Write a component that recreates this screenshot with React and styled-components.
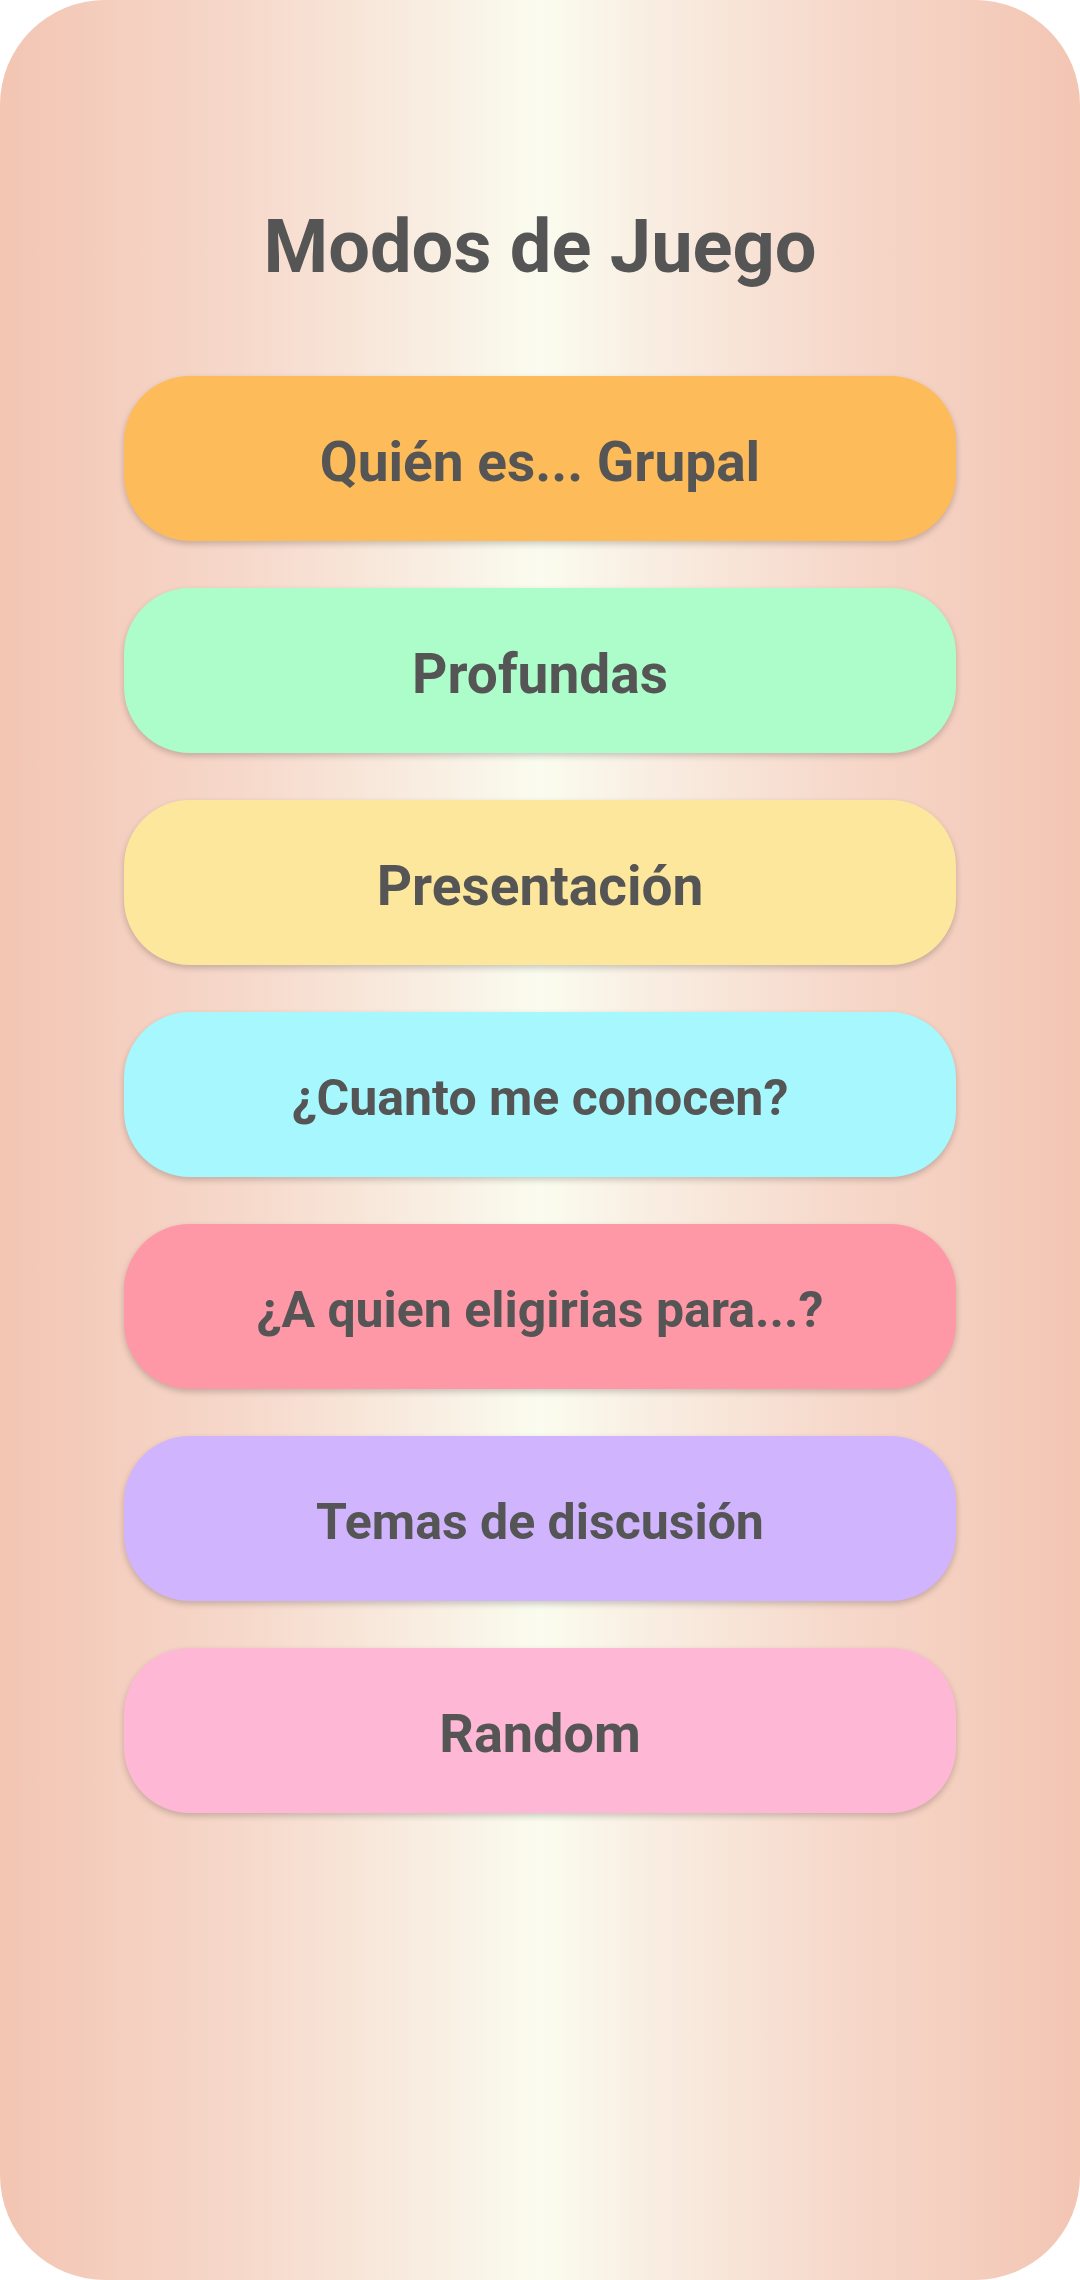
import styled, { createGlobalStyle } from "styled-components";

const GlobalStyle = createGlobalStyle`
    html, body {
        margin: 0;
        padding: 0;
        background: #ffffff;
    }
    * {
        box-sizing: border-box;
    }
`;

const modes = [
    { label: "Quién es... Grupal", color: "#fdbb59", size: 55 },
    { label: "Profundas", color: "#adfdca", size: 55 },
    { label: "Presentación", color: "#fde79d", size: 55 },
    { label: "¿Cuanto me conocen?", color: "#a6f8fe", size: 50 },
    { label: "¿A quien eligirias para...?", color: "#fe98a7", size: 50 },
    { label: "Temas de discusión", color: "#d0b4fe", size: 50 },
    { label: "Random", color: "#feb8d6", size: 54 },
];

function App() {
    return (
        <>
            <GlobalStyle />
            <Screen>
                <Title>Modos de Juego</Title>
                <ModeList>
                    {modes.map((mode) => (
                        <ModeButton key={mode.label} $bg={mode.color} $size={mode.size}>
                            {mode.label}
                        </ModeButton>
                    ))}
                </ModeList>
            </Screen>
        </>
    );
}

const Screen = styled.div`
    width: 1080px;
    height: 2280px;
    border-radius: 105px;
    overflow: hidden;
    background: linear-gradient(
        to right,
        #f3c5b3 0%,
        #f6d8ca 22%,
        #f9eee2 40%,
        #fafcef 50%,
        #f9eee2 60%,
        #f6d8ca 78%,
        #f3c5b3 100%
    );
    display: flex;
    flex-direction: column;
    align-items: center;
    padding-top: 210px;
    font-family: Roboto, "Liberation Sans", sans-serif;
    color: #555555;
`;

const Title = styled.h1`
    margin: 0 0 92px;
    font-size: 74px;
    line-height: 74px;
    font-weight: 700;
`;

const ModeList = styled.div`
    width: 832px;
    display: flex;
    flex-direction: column;
    gap: 47px;
`;

const ModeButton = styled.button`
    height: 165px;
    width: 100%;
    border: none;
    border-radius: 66px;
    background: ${(p) => p.$bg};
    box-shadow: 0 3px 6px rgba(0, 0, 0, 0.2);
    display: flex;
    align-items: center;
    justify-content: center;
    padding: 6px 0 0;
    font-family: Roboto, "Liberation Sans", sans-serif;
    font-size: ${(p) => p.$size}px;
    font-weight: 700;
    color: #555555;
    cursor: pointer;
`;

export default App;
